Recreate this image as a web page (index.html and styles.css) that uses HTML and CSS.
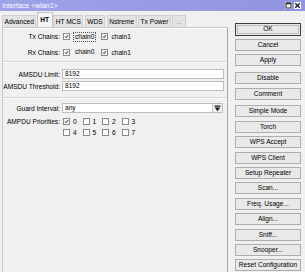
FILE: index.html
```html
<!DOCTYPE html>
<html lang="en">
<head>
    <meta charset="UTF-8">
    <title>Interface &lt;wlan1&gt;</title>
    <link rel="stylesheet" href="styles.css">
</head>
<body>
    <div class="window">
        <div class="titlebar">
            <span class="title">Interface &lt;wlan1&gt;</span>
            <span class="winbtns">
                <span class="wbtn">
                    <svg width="7" height="7" viewBox="0 0 7 7"><rect x="1" y="1" width="5" height="5" fill="none" stroke="#222" stroke-width="1"/><line x1="1" y1="1.5" x2="6" y2="1.5" stroke="#222" stroke-width="1.5"/></svg>
                </span>
                <span class="wbtn">
                    <svg width="7" height="7" viewBox="0 0 7 7"><path d="M1.2 1.2 L5.8 5.8 M5.8 1.2 L1.2 5.8" stroke="#222" stroke-width="1.4"/></svg>
                </span>
            </span>
        </div>
        <div class="body">
            <div class="left">
                <div class="tabs">
                    <span class="tab">Advanced</span>
                    <span class="tab active">HT</span>
                    <span class="tab">HT MCS</span>
                    <span class="tab">WDS</span>
                    <span class="tab">Nstreme</span>
                    <span class="tab">Tx Power</span>
                    <span class="tab more">...</span>
                </div>
                <div class="panel">
                    <div class="row first">
                        <span class="label">Tx Chains:</span>
                        <div class="checks">
                            <span class="opt"><span class="cb"><svg viewBox="0 0 7 7"><path d="M1.3 3.6 L2.9 5.2 L5.8 1.6" /></svg></span><span class="focus">chain0</span></span>
                            <span class="opt"><span class="cb"><svg viewBox="0 0 7 7"><path d="M1.3 3.6 L2.9 5.2 L5.8 1.6" /></svg></span><span>chain1</span></span>
                        </div>
                    </div>
                    <div class="row second">
                        <span class="label">Rx Chains:</span>
                        <div class="checks">
                            <span class="opt"><span class="cb"><svg viewBox="0 0 7 7"><path d="M1.3 3.6 L2.9 5.2 L5.8 1.6" /></svg></span><span class="plain">chain0</span></span>
                            <span class="opt"><span class="cb"><svg viewBox="0 0 7 7"><path d="M1.3 3.6 L2.9 5.2 L5.8 1.6" /></svg></span><span>chain1</span></span>
                        </div>
                    </div>
                    <div class="sep first-sep"></div>
                    <div class="row field amsdu">
                        <span class="label">AMSDU Limit:</span>
                        <div class="input">8192</div>
                    </div>
                    <div class="row field thr">
                        <span class="label">AMSDU Threshold:</span>
                        <div class="input">8192</div>
                    </div>
                    <div class="sep second-sep"></div>
                    <div class="row field guard">
                        <span class="label">Guard Interval:</span>
                        <div class="input select">
                            <span>any</span>
                            <span class="drop">
                                <svg width="7" height="7" viewBox="0 0 7 7"><rect x="0.5" y="0.5" width="6" height="1.2" fill="#111"/><path d="M0.8 2.6 H6.2 L3.5 6.2 Z" fill="#111"/></svg>
                            </span>
                        </div>
                    </div>
                    <div class="row ampdu">
                        <span class="label">AMPDU Priorities:</span>
                        <div class="prio">
                            <span class="opt"><span class="cb"><svg viewBox="0 0 7 7"><path d="M1.3 3.6 L2.9 5.2 L5.8 1.6" /></svg></span>0</span>
                            <span class="opt"><span class="cb"></span>1</span>
                            <span class="opt"><span class="cb"></span>2</span>
                            <span class="opt"><span class="cb"></span>3</span>
                            <span class="opt"><span class="cb"></span>4</span>
                            <span class="opt"><span class="cb"></span>5</span>
                            <span class="opt"><span class="cb"></span>6</span>
                            <span class="opt"><span class="cb"></span>7</span>
                        </div>
                    </div>
                </div>
            </div>
            <div class="actions">
                <button class="btn default">OK</button>
                <button class="btn">Cancel</button>
                <button class="btn">Apply</button>
                <button class="btn group">Disable</button>
                <button class="btn">Comment</button>
                <button class="btn group">Simple Mode</button>
                <button class="btn">Torch</button>
                <button class="btn">WPS Accept</button>
                <button class="btn">WPS Client</button>
                <button class="btn">Setup Repeater</button>
                <button class="btn">Scan...</button>
                <button class="btn">Freq. Usage...</button>
                <button class="btn">Align...</button>
                <button class="btn">Sniff...</button>
                <button class="btn">Snooper...</button>
                <button class="btn">Reset Configuration</button>
            </div>
        </div>
    </div>
</body>
</html>
```

FILE: styles.css
```css
body {
    margin: 0;
    padding: 0;
    background: #f0f0f0;
    font-family: "Liberation Sans", Arial, sans-serif;
    font-size: 6.6px;
    color: #000;
}

.window {
    width: 305px;
    height: 272px;
    overflow: hidden;
    background: #f0f0f0;
}

.titlebar {
    height: 11px;
    background: linear-gradient(to right, #9ea2e8, #9195e2);
    display: flex;
    align-items: center;
    justify-content: space-between;
    padding: 0 4px 0 2px;
}

.title {
    color: #fff;
    line-height: 11px;
    font-size: 7px;
}

.winbtns {
    display: flex;
    gap: 2px;
}

.wbtn {
    width: 7px;
    height: 7px;
    background: #fff;
    display: flex;
}

.body {
    display: flex;
}

.left {
    width: 228px;
    display: flex;
    flex-direction: column;
}

.tabs {
    height: 16px;
    display: flex;
    align-items: flex-end;
    gap: 1.5px;
    padding-left: 2px;
}

.tab {
    height: 11px;
    line-height: 11px;
    padding: 0 1.5px;
    background: #e3e3e3;
    border: 1px solid #d0d0d0;
    border-bottom: none;
    white-space: nowrap;
}

.tab.active {
    height: 14px;
    line-height: 13px;
    background: #f5f5f5;
    margin: 0 -1px 0 -1px;
    position: relative;
    z-index: 1;
    border-color: #c4c4c4;
    font-weight: bold;
    padding: 0 2.5px;
}

.tab.more {
    color: #888;
    padding: 0 3px;
}

.panel {
    margin-left: 2px;
    height: 245px;
    border: 1px solid #c8c8c8;
    border-right-color: #a8a8a8;
    border-bottom: none;
    box-shadow: inset 0 1px 0 #fff;
}

.row {
    display: flex;
    align-items: center;
    height: 11px;
}

.row.first { margin-top: 3px; }
.row.second { margin-top: 4.5px; }
.row.amsdu { margin-top: 6px; height: 10px; }
.row.thr { margin-top: 2px; height: 10px; }
.row.guard { margin-top: 4px; height: 10px; }
.row.ampdu { margin-top: 3px; height: auto; align-items: flex-start; }

.label {
    width: 57px;
    text-align: right;
    padding-right: 2px;
    flex-shrink: 0;
    white-space: nowrap;
}

.row.ampdu .label {
    line-height: 11px;
}

.checks {
    display: flex;
    gap: 5px;
    padding-left: 1px;
}

.opt {
    display: flex;
    align-items: center;
    gap: 3px;
    height: 11px;
}

.cb {
    width: 5px;
    height: 5px;
    border: 1px solid #8a8a8a;
    background: #fff;
    display: flex;
}

.cb svg {
    width: 5px;
    height: 5px;
    overflow: visible;
}

.cb path {
    fill: none;
    stroke: #000;
    stroke-width: 1.3;
}

.focus,
.plain {
    padding: 0 1px;
    border: 1px dotted #555;
    line-height: 8px;
}

.plain {
    border-color: transparent;
}

.sep {
    height: 0;
    border-top: 1px solid #d6d6d6;
    border-bottom: 1px solid #fbfbfb;
}

.first-sep { margin-top: 3.5px; }
.second-sep { margin-top: 6px; }

.input {
    width: 157px;
    height: 8px;
    line-height: 8px;
    padding: 0 1px 0 2px;
    background: #fff;
    border: 1px solid #bdbdbd;
    display: flex;
    align-items: center;
    justify-content: space-between;
}

.input.select {
    padding-right: 0;
}

.drop {
    width: 9px;
    height: 8px;
    background: #f0f0f0;
    border-left: 1px solid #cfcfcf;
    display: flex;
    align-items: center;
    justify-content: center;
}

.prio {
    display: grid;
    grid-template-columns: repeat(4, 19.5px);
    padding-left: 1px;
}

.prio .opt {
    gap: 3px;
}

.actions {
    width: 66px;
    margin-left: 7px;
    padding-top: 12px;
    display: flex;
    flex-direction: column;
    gap: 3.4px;
}

.btn {
    height: 12px;
    padding: 0;
    font-family: inherit;
    font-size: 6.6px;
    color: #000;
    background: #e9e9e9;
    border: 1px solid #adadad;
    border-radius: 0;
    line-height: 10px;
    white-space: nowrap;
}

.btn.default {
    border: 1px solid #3c3c3c;
    box-shadow: inset 0 0 0 1px #e9e9e9, inset 0 0 0 2px #bcbcbc;
    height: 12.5px;
}

.btn.group {
    margin-top: 2.5px;
}
```
